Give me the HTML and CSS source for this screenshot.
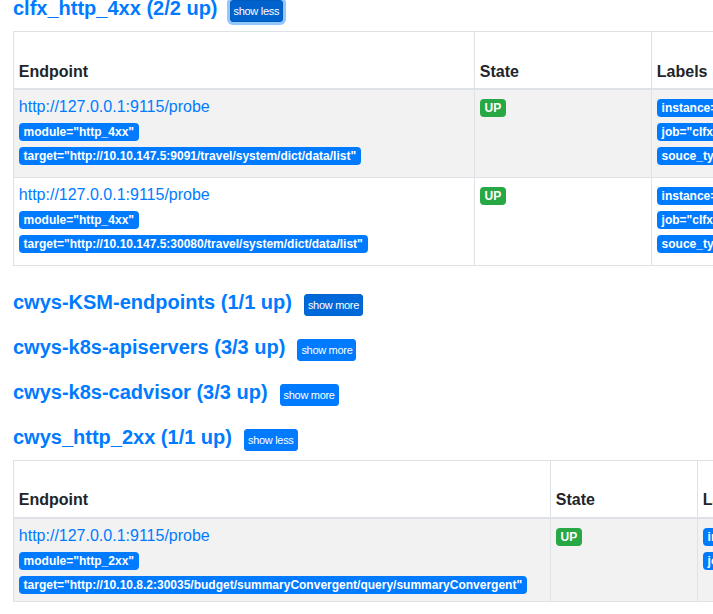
FILE: index.html
```html
<!DOCTYPE html>
<html lang="en">
<head>
<meta charset="utf-8">
<title>Targets</title>
<link rel="stylesheet" href="styles.css">
</head>
<body>
<div class="page">

  <section class="pool">
    <div class="pool-head">
      <h2 class="pool-title"><a href="#clfx_http_4xx">clfx_http_4xx (2/2 up)</a></h2>
      <button class="btn btn-focus" type="button">show less</button>
    </div>
    <table class="targets targets-tall targets-a">
      <colgroup>
        <col class="col-endpoint"><col class="col-state"><col class="col-labels"><col class="col-last"><col class="col-dur"><col class="col-err">
      </colgroup>
      <thead>
        <tr><th>Endpoint</th><th>State</th><th>Labels</th><th>Last Scrape</th><th>Scrape Duration</th><th>Error</th></tr>
      </thead>
      <tbody>
        <tr class="striped">
          <td>
            <a class="endpoint" href="#">http://127.0.0.1:9115/probe</a>
            <div class="label-line"><span class="badge badge-primary">module="http_4xx"</span></div>
            <div class="label-line"><span class="badge badge-primary">target="http://10.10.147.5:9091/travel/system/dict/data/list"</span></div>
          </td>
          <td><span class="badge badge-success">UP</span></td>
          <td>
            <div class="label-line"><span class="badge badge-primary">instance="http://10.10.147.5:9091/travel/system/dict/data/list"</span></div>
            <div class="label-line"><span class="badge badge-primary">job="clfx_http_4xx"</span></div>
            <div class="label-line"><span class="badge badge-primary">souce_type="http"</span></div>
          </td>
          <td>3.124s ago</td>
          <td>12.41ms</td>
          <td></td>
        </tr>
        <tr>
          <td>
            <a class="endpoint" href="#">http://127.0.0.1:9115/probe</a>
            <div class="label-line"><span class="badge badge-primary">module="http_4xx"</span></div>
            <div class="label-line"><span class="badge badge-primary">target="http://10.10.147.5:30080/travel/system/dict/data/list"</span></div>
          </td>
          <td><span class="badge badge-success">UP</span></td>
          <td>
            <div class="label-line"><span class="badge badge-primary">instance="http://10.10.147.5:30080/travel/system/dict/data/list"</span></div>
            <div class="label-line"><span class="badge badge-primary">job="clfx_http_4xx"</span></div>
            <div class="label-line"><span class="badge badge-primary">souce_type="http"</span></div>
          </td>
          <td>8.502s ago</td>
          <td>10.87ms</td>
          <td></td>
        </tr>
      </tbody>
    </table>
  </section>

  <section class="pool">
    <div class="pool-head">
      <h2 class="pool-title"><a href="#cwys-KSM-endpoints">cwys-KSM-endpoints (1/1 up)</a></h2>
      <button class="btn btn-hover" type="button">show more</button>
    </div>
  </section>

  <section class="pool">
    <div class="pool-head">
      <h2 class="pool-title"><a href="#cwys-k8s-apiservers">cwys-k8s-apiservers (3/3 up)</a></h2>
      <button class="btn" type="button">show more</button>
    </div>
  </section>

  <section class="pool">
    <div class="pool-head">
      <h2 class="pool-title"><a href="#cwys-k8s-cadvisor">cwys-k8s-cadvisor (3/3 up)</a></h2>
      <button class="btn" type="button">show more</button>
    </div>
  </section>

  <section class="pool">
    <div class="pool-head">
      <h2 class="pool-title"><a href="#cwys_http_2xx">cwys_http_2xx (1/1 up)</a></h2>
      <button class="btn" type="button">show less</button>
    </div>
    <table class="targets targets-b">
      <colgroup>
        <col class="col-endpoint"><col class="col-state"><col class="col-labels"><col class="col-last"><col class="col-dur"><col class="col-err">
      </colgroup>
      <thead>
        <tr><th>Endpoint</th><th>State</th><th>Labels</th><th>Last Scrape</th><th>Scrape Duration</th><th>Error</th></tr>
      </thead>
      <tbody>
        <tr class="striped">
          <td>
            <a class="endpoint" href="#">http://127.0.0.1:9115/probe</a>
            <div class="label-line"><span class="badge badge-primary">module="http_2xx"</span></div>
            <div class="label-line"><span class="badge badge-primary">target="http://10.10.8.2:30035/budget/summaryConvergent/query/summaryConvergent"</span></div>
          </td>
          <td><span class="badge badge-success">UP</span></td>
          <td>
            <div class="label-line"><span class="badge badge-primary">instance="http://10.10.8.2:30035/budget/summaryConvergent/query/summaryConvergent"</span></div>
            <div class="label-line"><span class="badge badge-primary">job="cwys_http_2xx"</span></div>
          </td>
          <td>5.318s ago</td>
          <td>9.114ms</td>
          <td></td>
        </tr>
      </tbody>
    </table>
  </section>

</div>
</body>
</html>
```
FILE: styles.css
```css
html, body {
  margin: 0;
  overflow: hidden;
  background: #fff;
}

body {
  font-family: "Liberation Sans", Arial, sans-serif;
  font-size: 16px;
  line-height: 1.5;
  color: #212529;
}

.page {
  padding: 0 0 0 13px;
  margin-top: -14px;
}

.pool-head {
  display: flex;
  align-items: baseline;
  gap: 12px;
  padding: 10px 0 9px;
}

.pool-title {
  margin: 0;
  font-size: 20px;
  line-height: 24px;
  font-weight: 700;
  white-space: nowrap;
}

.pool-title a {
  color: #007bff;
  text-decoration: none;
}

.btn {
  font-family: "Liberation Sans", Arial, sans-serif;
  font-size: 11px;
  letter-spacing: -0.3px;
  line-height: 18px;
  padding: 1px 3px;
  border: 1px solid #007bff;
  border-radius: 3px;
  background: #007bff;
  color: #fff;
  white-space: nowrap;
}

.btn-hover {
  background: #0069d9;
  border-color: #0062cc;
}

.btn-focus {
  background: #0062cc;
  border-color: #005cbf;
  box-shadow: 0 0 0 3px rgba(38, 143, 255, 0.5);
}

.targets {
  border-collapse: collapse;
  table-layout: fixed;
  margin: 0 0 14px;
  border: 1px solid #dee2e6;
}

.targets-a { width: 1290px; }
.targets-b { width: 1290px; }

.targets-a .col-endpoint { width: 461px; }
.targets-a .col-state { width: 177px; }
.targets-b .col-endpoint { width: 537px; }
.targets-b .col-state { width: 147px; }
.col-labels { width: 360px; }
.col-last { width: 70px; }
.col-dur { width: 85px; }

.targets th,
.targets td {
  border: 1px solid #dee2e6;
  padding: 4.8px;
  vertical-align: top;
  text-align: left;
}

.targets th {
  vertical-align: bottom;
  border-bottom: 2px solid #dee2e6;
  padding-top: 3.5px;
  font-weight: 700;
}

.targets tr.striped td {
  background: #f2f2f2;
}

.targets-tall td {
  padding-bottom: 10px;
}

.endpoint {
  display: block;
  color: #007bff;
  text-decoration: none;
  white-space: nowrap;
}

.label-line {
  white-space: nowrap;
}

.badge {
  display: inline-block;
  padding: 3px 4.8px;
  font-size: 12px;
  font-weight: 700;
  line-height: 1;
  white-space: nowrap;
  vertical-align: baseline;
  border-radius: 4px;
  color: #fff;
}

.badge-primary { background: #007bff; }
.badge-success { background: #28a745; }
```
